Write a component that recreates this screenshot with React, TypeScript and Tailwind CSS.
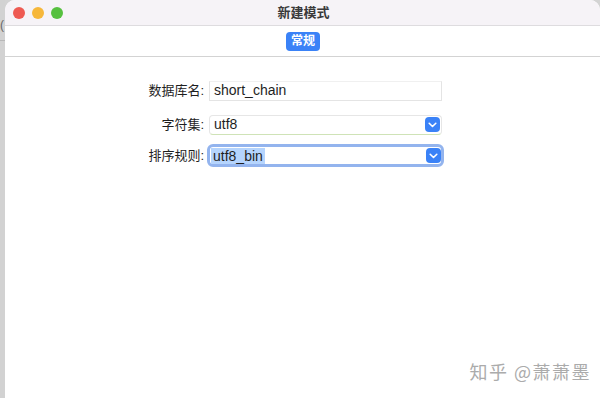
import React from "react";

const Chevron = () => (
  <div className="w-[15px] h-[15px] rounded-[4px] bg-[#3a82f7] flex items-center justify-center">
    <svg width="9" height="6" viewBox="0 0 9 6">
      <path d="M1.2 1.3 L4.5 4.5 L7.8 1.3" fill="none" stroke="white" strokeWidth="1.6" strokeLinecap="round" strokeLinejoin="round" />
    </svg>
  </div>
);

export default function App() {
  const font = { fontFamily: '"Liberation Sans", "Noto Sans CJK SC", sans-serif' };
  return (
    <div className="w-[600px] h-[398px] flex bg-[#d3d3d3] overflow-hidden" style={font}>
      <div className="w-[5px] shrink-0 bg-[#d2d2d2] relative">
        <div className="absolute left-0 top-[19px] text-[12px] leading-none text-[#666]">(</div>
        <div className="absolute left-0 top-[40px] w-[5px] h-px bg-[#b8b8b8]" />
      </div>
      <div className="flex-1 bg-white rounded-tl-[10px] rounded-tr-[10px] overflow-hidden flex flex-col">
        <div className="h-[26px] bg-[#f6f3f7] border-b border-[#dedcdf] flex items-center relative">
          <div className="flex items-center gap-[7px] pl-[8px]">
            <div className="w-[12px] h-[12px] rounded-full bg-[#ee5a52]" />
            <div className="w-[12px] h-[12px] rounded-full bg-[#f6b73a]" />
            <div className="w-[12px] h-[12px] rounded-full bg-[#56c03f]" />
          </div>
          <div className="absolute inset-0 flex items-center justify-center pl-[2px] text-[13px] font-bold text-[#3a3a3a]">
            新建模式
          </div>
        </div>
        <div className="h-[31px] border-b border-[#d3d3d3] flex items-center justify-center pl-[1px]">
          <div className="h-[19px] px-[5px] rounded-[4px] bg-[#3a82f7] text-white text-[12px] font-bold flex items-center">
            常规
          </div>
        </div>
        <div className="flex flex-col pt-[23px] text-[13px] text-[#1e1e1e]">
          <div className="flex items-center h-[21px]">
            <div className="w-[199px] text-right">数据库名:</div>
            <div className="ml-[5px] w-[233px] h-[20px] border border-[#e4e4e4] border-t-[#f0f0f0] bg-white flex items-center pl-[4px] text-[14px]">
              short_chain
            </div>
          </div>
          <div className="flex items-center h-[21px] mt-[13px]">
            <div className="w-[199px] text-right">字符集:</div>
            <div className="ml-[5px] w-[233px] h-[20px] rounded-[4px] border border-[#e6e6e6] border-b-[#cfe3b7] bg-white flex items-center justify-between pl-[4px] pr-[1px] text-[14px]">
              <span>utf8</span>
              <Chevron />
            </div>
          </div>
          <div className="flex items-center h-[23px] mt-[9px]">
            <div className="w-[199px] text-right">排序规则:</div>
            <div className="ml-[3px] w-[237px] h-[23px] rounded-[6px] border-[3px] border-[#93b4ee] bg-white flex items-center justify-between pl-[1px] pr-0 text-[14px]">
              <span className="bg-[#b5d4fd] px-[2px] leading-[16px]">utf8_bin</span>
              <Chevron />
            </div>
          </div>
        </div>
        <div className="flex-1" />
        <div className="flex justify-end pr-[9px] pb-[13px] text-[18px] text-[#ababab] tracking-[1.5px]" style={{ fontFamily: '"Noto Sans CJK SC", sans-serif' }}>
          知乎 @萧萧墨
        </div>
      </div>
    </div>
  );
}
